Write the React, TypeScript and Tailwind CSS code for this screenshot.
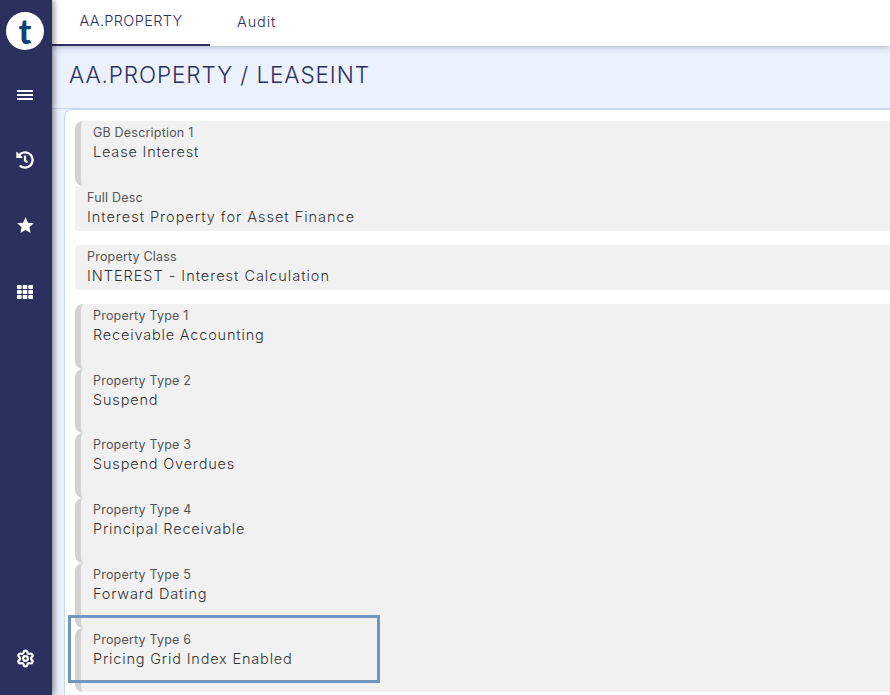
import React from "react";
import { FaHistory, FaTh } from "react-icons/fa";
import { Settings } from "lucide-react";

function Bar({ label, value }: { label: string; value: string }) {
  return (
    <div className="h-[64.7px] shrink-0 rounded-l-[8px] border-l-[6px] border-[#d2d2d2] bg-[#f1f1f1] pl-3 pt-[4px]">
      <div className="text-[12.5px] leading-[16px] tracking-[0.2px] text-[#555555]">{label}</div>
      <div className="mt-[1px] text-[14.5px] leading-[20px] font-light tracking-[0.82px] text-[#333333]">{value}</div>
    </div>
  );
}

function Plain({ label, value, className }: { label: string; value: string; className?: string }) {
  return (
    <div className={"h-[45px] shrink-0 rounded-l-[4px] bg-[#f1f1f1] pl-3 pt-[4px] " + (className ?? "")}>
      <div className="text-[12.5px] leading-[16px] tracking-[0.2px] text-[#555555]">{label}</div>
      <div className="mt-[1px] text-[14.5px] leading-[20px] font-light tracking-[0.98px] text-[#333333]">{value}</div>
    </div>
  );
}

export default function App() {
  return (
    <div className="relative flex h-[695px] w-[890px] overflow-hidden bg-white font-['Inter','Noto_Sans',sans-serif]">
      <aside className="z-20 flex h-full w-[52px] shrink-0 flex-col items-center bg-[#2b305f] shadow-[2px_0_6px_rgba(0,0,0,0.45)]">
        <div className="mt-[12px] mr-[2px] flex h-[38px] w-[38px] items-center justify-center rounded-full bg-white">
          <span className="mt-[-1px] font-['Lato',sans-serif] text-[34px] leading-none font-black text-[#0f3f78]">t</span>
        </div>
        <div className="mt-[40px] mr-[2px] flex flex-col gap-[2px]">
          <span className="h-[2px] w-4 bg-white" />
          <span className="h-[2px] w-4 bg-white" />
          <span className="h-[2px] w-4 bg-white" />
        </div>
        <div className="mt-[52px] mr-[2px] flex h-4 items-center text-white"><FaHistory size={18} /></div>
        <div className="mt-[49px] mr-[2px] flex h-4 items-center text-white">
          <svg width="17" height="16" viewBox="0 0 24 23" fill="white"><path d="M12 0.5l3.5 7.6 8.3 1-6.1 5.6 1.6 8.2-7.3-4.1-7.3 4.1 1.6-8.2L.2 9.1l8.3-1z" /></svg>
        </div>
        <div className="mt-[51px] mr-[2px] flex h-4 items-center text-white"><FaTh size={16} /></div>
        <div className="mt-auto mr-[2px] mb-[27px] text-white"><Settings size={19} strokeWidth={2.8} /></div>
      </aside>

      <main className="flex min-w-0 flex-1 flex-col">
        <nav className="z-10 flex h-[46px] shrink-0 items-stretch bg-white text-[14.5px] font-light tracking-[0.35px] text-[#2b305f] shadow-[0_1px_6px_rgba(43,48,95,0.35)]">
          <div className="flex w-[158px] items-center justify-center border-b-2 border-[#2b305f] pb-[2px]">AA.PROPERTY</div>
          <div className="ml-[27px] flex items-center pb-[2px] tracking-[0.9px]">Audit</div>
        </nav>
        <header className="flex h-[63px] shrink-0 items-center border-b border-[#c9d8f0] bg-[#ebf2fd] pb-[4px] pl-[17px] text-[22.5px] font-light tracking-[0.92px] text-[#2b305f]">
          AA.PROPERTY / LEASEINT
        </header>
        <div className="flex flex-1 bg-[#ebf2fd] pl-[12px]">
          <section className="flex min-w-0 flex-1 flex-col rounded-tl-[8px] border-t border-l border-[#c9d8f0] bg-white pt-[11px] pl-[10px]">
            <Bar label="GB Description 1" value="Lease Interest" />
            <Plain label="Full Desc" value="Interest Property for Asset Finance" />
            <Plain label="Property Class" value="INTEREST - Interest Calculation" className="mt-[14px]" />
            <div className="mt-[14.4px] flex flex-col">
              <Bar label="Property Type 1" value="Receivable Accounting" />
              <Bar label="Property Type 2" value="Suspend" />
              <Bar label="Property Type 3" value="Suspend Overdues" />
              <Bar label="Property Type 4" value="Principal Receivable" />
              <Bar label="Property Type 5" value="Forward Dating" />
              <Bar label="Property Type 6" value="Pricing Grid Index Enabled" />
            </div>
          </section>
        </div>
      </main>

      <div className="absolute top-[615px] left-[68px] z-30 h-[68px] w-[312px] border-[3px] border-[#7096c4]" />
    </div>
  );
}
